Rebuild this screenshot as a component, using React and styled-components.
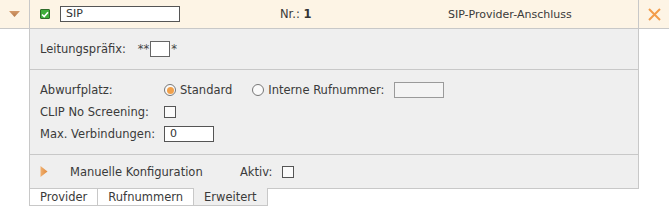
import React from 'react';
import styled, { createGlobalStyle } from 'styled-components';

const GlobalStyle = createGlobalStyle`
  body {
    margin: 0;
    background: #ffffff;
    font-family: "DejaVu Sans", Verdana, sans-serif;
    font-size: 11.5px;
    color: #3a3a3a;
  }
`;

const Page = styled.div`
  width: 669px;
`;

const HeaderRow = styled.div`
  display: flex;
  height: 28px;
  background: #fdf4e5;
  border-bottom: 1px solid #c8c8c8;
`;

const ToggleCell = styled.div`
  width: 29px;
  border-right: 1px solid #c8c8c8;
  display: flex;
  align-items: center;
  justify-content: center;
`;

const MainCell = styled.div`
  flex: 1;
  display: flex;
  align-items: center;
  padding-left: 10px;
`;

const CloseCell = styled.div`
  width: 30px;
  border-left: 1px solid #c8c8c8;
  display: flex;
  align-items: center;
  justify-content: center;
`;

const GreenCheck = styled.span`
  width: 10px;
  height: 10px;
  box-sizing: border-box;
  border: 1px solid #2f6b2a;
  background: #3fae3a;
  border-radius: 1px;
  display: flex;
  align-items: center;
  justify-content: center;
`;

const TextInput = styled.div`
  box-sizing: border-box;
  width: ${p => p.$w || 50}px;
  height: 16px;
  border: 1px solid ${p => (p.$disabled ? '#9a9a9a' : '#555555')};
  background: ${p => (p.$disabled ? '#f4f4f4' : '#ffffff')};
  padding-left: 5px;
  font-size: 11px;
  line-height: 14px;
  color: #333;
  margin-left: ${p => p.$ml || 0}px;
`;

const NrLabel = styled.div`
  margin-left: 100px;
  width: 168px;
  b {
    font-weight: bold;
    color: #333;
  }
`;

const Title = styled.div`
  font-size: 11px;
  color: #3a3a3a;
`;

const Panel = styled.div`
  margin-left: 29px;
  width: 610px;
  box-sizing: border-box;
  background: #efefef;
  border-left: 1px solid #c8c8c8;
  border-right: 1px solid #c8c8c8;
`;

const Section = styled.div`
  padding: ${p => p.$pad || '0'};
  padding-left: 10px;
  border-bottom: ${p => (p.$last ? 'none' : '1px solid #c8c8c8')};
  min-height: ${p => p.$h || 0}px;
  display: flex;
  flex-direction: column;
  justify-content: center;
`;

const InlineRow = styled.div`
  display: flex;
  align-items: center;
`;

const FormRow = styled.div`
  display: grid;
  grid-template-columns: 124px auto;
  align-items: center;
  height: 22px;
`;

const Value = styled.div`
  display: flex;
  align-items: center;
`;

const Stars = styled.span`
  margin-left: ${p => p.$ml || 0}px;
  color: #444;
`;

const SmallBox = styled.div`
  box-sizing: border-box;
  width: 20px;
  height: 16px;
  border: 1px solid #666;
  background: #fff;
  margin: 0 1px 0 1px;
`;

const Radio = styled.span`
  box-sizing: border-box;
  width: 12px;
  height: 12px;
  border-radius: 50%;
  border: 1px solid #777;
  background: #fafafa;
  display: flex;
  align-items: center;
  justify-content: center;
  margin-left: ${p => p.$ml || 0}px;
  margin-right: 4px;
  &::after {
    content: '';
    display: ${p => (p.$checked ? 'block' : 'none')};
    width: 7px;
    height: 7px;
    border-radius: 50%;
    background: #f0a04b;
  }
`;

const Checkbox = styled.span`
  box-sizing: border-box;
  width: 12px;
  height: 12px;
  border: 1px solid #555;
  background: #fbfbfb;
  margin-left: ${p => p.$ml || 0}px;
`;

const Expand = styled.span`
  width: 30px;
  display: flex;
  align-items: center;
`;

const ManualLabel = styled.span`
  width: 170px;
`;

const TabBar = styled.div`
  display: flex;
  margin-left: 29px;
  width: 610px;
  height: 18px;
`;

const Tab = styled.div`
  box-sizing: border-box;
  padding: 0 10px;
  display: flex;
  align-items: center;
  background: ${p => (p.$active ? '#efefef' : '#ffffff')};
  border-top: ${p => (p.$active ? 'none' : '1px solid #c8c8c8')};
  padding-top: ${p => (p.$active ? 1 : 0)}px;
  border-right: 1px solid #c8c8c8;
  border-bottom: 1px solid #c8c8c8;
  border-left: ${p => (p.$first ? '1px solid #c8c8c8' : 'none')};
  color: #3a3a3a;
`;

const TabFiller = styled.div`
  flex: 1;
  border-top: 1px solid #c8c8c8;
`;

const DownArrow = () => (
  <svg width="11" height="6" viewBox="0 0 11 6">
    <defs>
      <linearGradient id="dg" x1="0" y1="0" x2="0" y2="1">
        <stop offset="0" stopColor="#d49a6a" />
        <stop offset="1" stopColor="#b87a4a" />
      </linearGradient>
    </defs>
    <path d="M0 0 L11 0 L5.5 6 Z" fill="url(#dg)" />
  </svg>
);

const RightArrow = () => (
  <svg width="8" height="11" viewBox="0 0 8 11">
    <defs>
      <linearGradient id="rg" x1="0" y1="0" x2="1" y2="0">
        <stop offset="0" stopColor="#f0b070" />
        <stop offset="1" stopColor="#e08a3c" />
      </linearGradient>
    </defs>
    <path d="M0.5 0 L7.5 5.5 L0.5 11 Z" fill="url(#rg)" />
  </svg>
);

const CloseIcon = () => (
  <svg width="13" height="13" viewBox="0 0 13 13">
    <path d="M1 1 L12 12 M12 1 L1 12" stroke="#f39c4a" strokeWidth="2" />
  </svg>
);

const Tick = () => (
  <svg width="8" height="7" viewBox="0 0 8 7">
    <path d="M1 3.5 L3.2 5.6 L7 1.2" stroke="#ffffff" strokeWidth="1.6" fill="none" />
  </svg>
);

export default function App() {
  return (
    <Page>
      <GlobalStyle />
      <HeaderRow>
        <ToggleCell>
          <DownArrow />
        </ToggleCell>
        <MainCell>
          <GreenCheck>
            <Tick />
          </GreenCheck>
          <TextInput $w={120} $ml={10}>SIP</TextInput>
          <NrLabel>
            Nr.: <b>1</b>
          </NrLabel>
          <Title>SIP-Provider-Anschluss</Title>
        </MainCell>
        <CloseCell>
          <CloseIcon />
        </CloseCell>
      </HeaderRow>

      <Panel>
        <Section $h={40}>
          <InlineRow>
            <span>Leitungspräfix:</span>
            <Stars $ml={12}>**</Stars>
            <SmallBox />
            <Stars>*</Stars>
          </InlineRow>
        </Section>

        <Section $pad="9px 0">
          <FormRow>
            <span>Abwurfplatz:</span>
            <Value>
              <Radio $checked />
              <span>Standard</span>
              <Radio $ml={20} />
              <span>Interne Rufnummer:</span>
              <TextInput $w={50} $ml={10} $disabled />
            </Value>
          </FormRow>
          <FormRow>
            <span>CLIP No Screening:</span>
            <Value>
              <Checkbox />
            </Value>
          </FormRow>
          <FormRow>
            <span>Max. Verbindungen:</span>
            <Value>
              <TextInput $w={50}>0</TextInput>
            </Value>
          </FormRow>
        </Section>

        <Section $h={33} $last>
          <InlineRow>
            <Expand>
              <RightArrow />
            </Expand>
            <ManualLabel>Manuelle Konfiguration</ManualLabel>
            <span>Aktiv:</span>
            <Checkbox $ml={10} />
          </InlineRow>
        </Section>
      </Panel>

      <TabBar>
        <Tab $first>Provider</Tab>
        <Tab>Rufnummern</Tab>
        <Tab $active>Erweitert</Tab>
        <TabFiller />
      </TabBar>
    </Page>
  );
}
